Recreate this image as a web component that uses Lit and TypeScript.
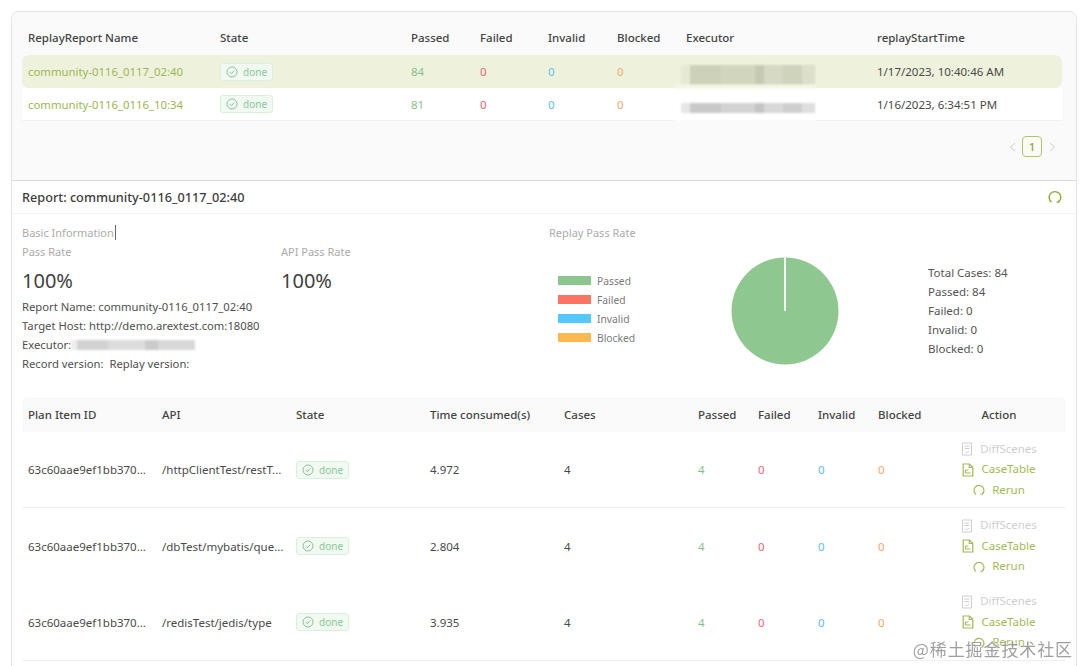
import { LitElement, html, css } from "lit";
import { customElement } from "lit/decorators.js";

const checkIcon = html`<svg class="ico" viewBox="0 0 12 12" width="12" height="12" fill="none" stroke="currentColor" stroke-width="0.9"><circle cx="6" cy="6" r="5"/><path d="M3.8 6.1 5.4 7.7 8.2 4.7"/></svg>`;
const reloadIcon = (size: number) => html`<svg viewBox="0 0 12 12" width=${size} height=${size} fill="none" stroke="currentColor" stroke-width="1.2"><path d="M3 10.4A5 5 0 1 1 9.2 10.2"/><path d="M9.6 8.6 8.9 10.8 7.2 10" stroke-width="0.9"/></svg>`;
const diffIcon = html`<svg viewBox="0 0 12 14" width="12" height="14" fill="none" stroke="currentColor" stroke-width="1"><path d="M1.5 1h9v12h-9z"/><path d="M3.5 4h5M3.5 6.5h5M4 9.5 5.5 11 8 9"/></svg>`;
const caseIcon = html`<svg viewBox="0 0 12 14" width="12" height="14" fill="none" stroke="currentColor" stroke-width="1.2"><path d="M1.2 1h6.3l3.3 3.3v8.7H1.2z"/><path d="M7.3 1v3.5h3.4"/><path d="M3.5 7h3M3.5 7v3M3.5 10h5"/></svg>`;

const Tag = () => html`<span class="tag">${checkIcon}<span>done</span></span>`;

const topRows = [
  { name: "community-0116_0117_02:40", passed: "84", time: "1/17/2023, 10:40:46 AM", active: true },
  { name: "community-0116_0116_10:34", passed: "81", time: "1/16/2023, 6:34:51 PM", active: false },
];
const planRows = [
  { api: "/httpClientTest/restT...", time: "4.972", line: true },
  { api: "/dbTest/mybatis/que...", time: "2.804", line: false },
  { api: "/redisTest/jedis/type", time: "3.935", line: true },
];

@customElement("app-root")
export class AppRoot extends LitElement {
  static styles = css`
    :host { display: block; width: 1080px; height: 666px; overflow: hidden; background: #fff; position: relative;
      font-family: "Noto Sans", "Open Sans", sans-serif; font-size: 11.5px; color: #4a4a4a; }
    .card { margin: 11px 3px 0 11px; height: 665px; box-sizing: border-box; border: 1px solid #e2e2e2; border-radius: 7px 7px 0 0; overflow: hidden; }
    .top { height: 169px; background: #fafafa; border-bottom: 1px solid #dcdcdc; padding: 9px 14px 0 10px; box-sizing: border-box; }
    .t-grid { display: grid; grid-template-columns: 192px 191px 69px 68px 69px 69px 191px 1fr; align-items: center; }
    .t-grid > * { padding-left: 6px; white-space: nowrap; }
    .thead { height: 34px; padding-bottom: 2px; box-sizing: border-box; font-weight: 500; color: #444; }
    .row { height: 33px; background: #fff; border-bottom: 1px solid #f0f0f0; box-sizing: border-box; }
    .row.active { background: #eef2dc; border-radius: 7px; border-bottom: 0; }
    .name { color: #9db653; font-size: 11.35px; }
    .pass { color: #86bf8e; }
    .fail { color: #ee6480; }
    .inv { color: #62bdf0; }
    .blk { color: #f5a86a; }
    .tag { display: inline-flex; align-items: center; gap: 5px; height: 18px; box-sizing: border-box; padding: 0 5px; border: 1px solid #d9f0dc; border-radius: 3px; background: #f0faf1; color: #8cc59a; font-size: 10px; }
    .ico { color: #86b792; }
    .exec { position: relative; align-self: stretch; display: flex; align-items: center; }
    .exec::after { content: ""; position: absolute; left: -6px; width: 142px; bottom: -1px; height: 5px; background: #fff; filter: blur(1.5px); }
    .active .exec::after { bottom: -1px; height: 4px; background: #f5f7e8; }
    .blur { display: block; width: 134px; margin-left: -5px; background: linear-gradient(90deg, #e6e6e6 0 7%, #c9c9c9 7% 30%, #d3d3d3 30% 55%, #c4c4c4 55% 62%, #d8d8d8 62% 76%, #cfcfcf 76% 90%, #dedede 90%); filter: blur(0.8px); }
    .blur.big { height: 20px; margin-top: 7px; opacity: 0.75; background: linear-gradient(90deg, #e4e8d2 0 7%, #c3c6ae 7% 30%, #c9ccb5 30% 55%, #b9bca4 55% 62%, #ced1bb 62% 76%, #c6c9b2 76% 90%, #d6d9c4 90%); }
    .blur.small { height: 10px; margin-top: 7px; }
    .pager { display: flex; justify-content: flex-end; align-items: center; gap: 3px; margin-top: 15px; padding-right: 3px; color: #ccc; }
    .pg { width: 20px; height: 21px; box-sizing: border-box; border: 1px solid #aec56a; border-radius: 4px; display: flex; align-items: center; justify-content: center; color: #8ba53f; font-weight: 500; background: #fbfcf6; }
    .chev { width: 14px; display: flex; justify-content: center; }
    .rep-head { height: 33px; display: flex; align-items: center; justify-content: space-between; padding: 0 14px 0 10px; border-bottom: 1px solid #f2f2f2; box-sizing: border-box; font-size: 12.7px; font-weight: 500; color: #3d3d3d; }
    .refresh { display: flex; color: #8eae3a; }
    .info { display: grid; grid-template-columns: 527px 1fr; height: 183px; padding: 10px 0 0 10px; box-sizing: border-box; }
    .muted { color: #ababab; font-size: 11px; line-height: 18px; }
    .caret { border-right: 1px solid #666; padding-right: 1px; }
    .rates { display: grid; grid-template-columns: 259px 1fr; margin-top: 1px; }
    .pct { font-size: 20px; line-height: 28px; margin-top: 6px; color: #3f3f3f; }
    .meta { margin-top: 2px; line-height: 19px; color: #4f4f4f; font-size: 11.25px; }
    .meta .ex { display: inline-block; width: 124px; height: 10px; margin-left: -3px; vertical-align: -1px; background: linear-gradient(90deg, #eee 0 5%, #d2d2d2 5% 30%, #dcdcdc 30% 60%, #cbcbcb 60% 70%, #d8d8d8 70%); filter: blur(0.8px); }
    .chart { display: grid; grid-template-columns: 182px 197px 1fr; grid-template-rows: 18px 1fr; }
    .chart-title { grid-column: 1 / -1; }
    .legend { padding: 29px 0 0 9px; display: flex; flex-direction: column; }
    .leg { display: flex; align-items: center; gap: 6px; height: 19px; font-size: 10.3px; color: #7b7b7b; }
    .sw { width: 33px; height: 9px; }
    .pie { padding-top: 15px; }
    .pie svg { display: block; }
    .totals { padding-top: 21px; line-height: 19px; color: #555; }
    .p-grid { display: grid; grid-template-columns: 134px 134px 134px 134px 134px 60px 60px 60px 60px 1fr; align-items: center; margin: 0 10px; }
    .p-grid > * { padding-left: 6px; white-space: nowrap; }
    .phead { height: 35px; background: #fafafa; font-weight: 500; color: #444; border-radius: 6px 6px 0 0; }
    .phead .act { text-align: center; padding-left: 0; }
    .prow { height: 76px; box-sizing: border-box; }
    .prow.line { border-bottom: 1px solid #efefef; }
    .prow.last { height: 77px; }
    .action { display: flex; flex-direction: column; align-items: center; padding-left: 0; line-height: 20.5px; }
    .btn { display: flex; align-items: center; gap: 7px; color: #a1ba55; }
    .btn.off { color: #cfcfcf; }
    .mark { position: absolute; right: 7px; bottom: 5px; font-family: "Noto Sans CJK SC", sans-serif; font-size: 17px; color: #8f8f8f; letter-spacing: 0.9px; text-shadow: 0 0 2px #fff, 0 0 2px #fff; opacity: 0.85; }
  `;

  render() {
    return html`
      <div class="card">
        <div class="top">
          <div class="t-grid thead">
            <span>ReplayReport Name</span><span>State</span><span>Passed</span><span>Failed</span><span>Invalid</span><span>Blocked</span><span>Executor</span><span>replayStartTime</span>
          </div>
          ${topRows.map((r) => html`
            <div class="t-grid row ${r.active ? "active" : ""}">
              <span class="name">${r.name}</span>
              <span>${Tag()}</span>
              <span class="pass">${r.passed}</span>
              <span class="fail">0</span>
              <span class="inv">0</span>
              <span class="blk">0</span>
              <span class="exec"><i class="blur ${r.active ? "big" : "small"}"></i></span>
              <span>${r.time}</span>
            </div>`)}
          <div class="pager">
            <span class="chev"><svg width="7" height="10" viewBox="0 0 7 10" fill="none" stroke="currentColor"><path d="M6 1 1.5 5 6 9"/></svg></span>
            <span class="pg">1</span>
            <span class="chev"><svg width="7" height="10" viewBox="0 0 7 10" fill="none" stroke="currentColor"><path d="M1 1 5.5 5 1 9"/></svg></span>
          </div>
        </div>
        <div class="rep-head">
          <span>Report: community-0116_0117_02:40</span>
          <span class="refresh">${reloadIcon(14)}</span>
        </div>
        <div class="info">
          <div>
            <div class="muted"><span class="caret">Basic Information</span></div>
            <div class="rates">
              <div><div class="muted">Pass Rate</div><div class="pct">100%</div></div>
              <div><div class="muted">API Pass Rate</div><div class="pct">100%</div></div>
            </div>
            <div class="meta">
              <div>Report Name: community-0116_0117_02:40</div>
              <div>Target Host: http://demo.arextest.com:18080</div>
              <div>Executor: <i class="ex"></i></div>
              <div>Record version:&nbsp; Replay version:</div>
            </div>
          </div>
          <div class="chart">
            <div class="muted chart-title">Replay Pass Rate</div>
            <div class="legend">
              ${[["Passed", "#8cc68e"], ["Failed", "#fb7362"], ["Invalid", "#55c8fb"], ["Blocked", "#fdb84f"]].map(
                ([t, c]) => html`<div class="leg"><span class="sw" style="background:${c}"></span>${t}</div>`
              )}
            </div>
            <div class="pie">
              <svg width="108" height="108" viewBox="0 0 108 108">
                <circle cx="54" cy="54" r="53.5" fill="#8fc791"/>
                <rect x="53" y="0" width="2" height="54" fill="#f4f8f2"/>
              </svg>
            </div>
            <div class="totals">
              <div>Total Cases: 84</div><div>Passed: 84</div><div>Failed: 0</div><div>Invalid: 0</div><div>Blocked: 0</div>
            </div>
          </div>
        </div>
        <div class="p-grid phead">
          <span>Plan Item ID</span><span>API</span><span>State</span><span>Time consumed(s)</span><span>Cases</span><span>Passed</span><span>Failed</span><span>Invalid</span><span>Blocked</span><span class="act">Action</span>
        </div>
        ${planRows.map((r, i) => html`
          <div class="p-grid prow ${r.line ? "line" : ""} ${i === 2 ? "last" : ""}">
            <span>63c60aae9ef1bb370...</span>
            <span>${r.api}</span>
            <span>${Tag()}</span>
            <span>${r.time}</span>
            <span>4</span>
            <span class="pass">4</span>
            <span class="fail">0</span>
            <span class="inv">0</span>
            <span class="blk">0</span>
            <div class="action">
              <span class="btn off">${diffIcon}DiffScenes</span>
              <span class="btn">${caseIcon}CaseTable</span>
              <span class="btn">${reloadIcon(12)}Rerun</span>
            </div>
          </div>`)}
      </div>
      <div class="mark">@稀土掘金技术社区</div>
    `;
  }
}
